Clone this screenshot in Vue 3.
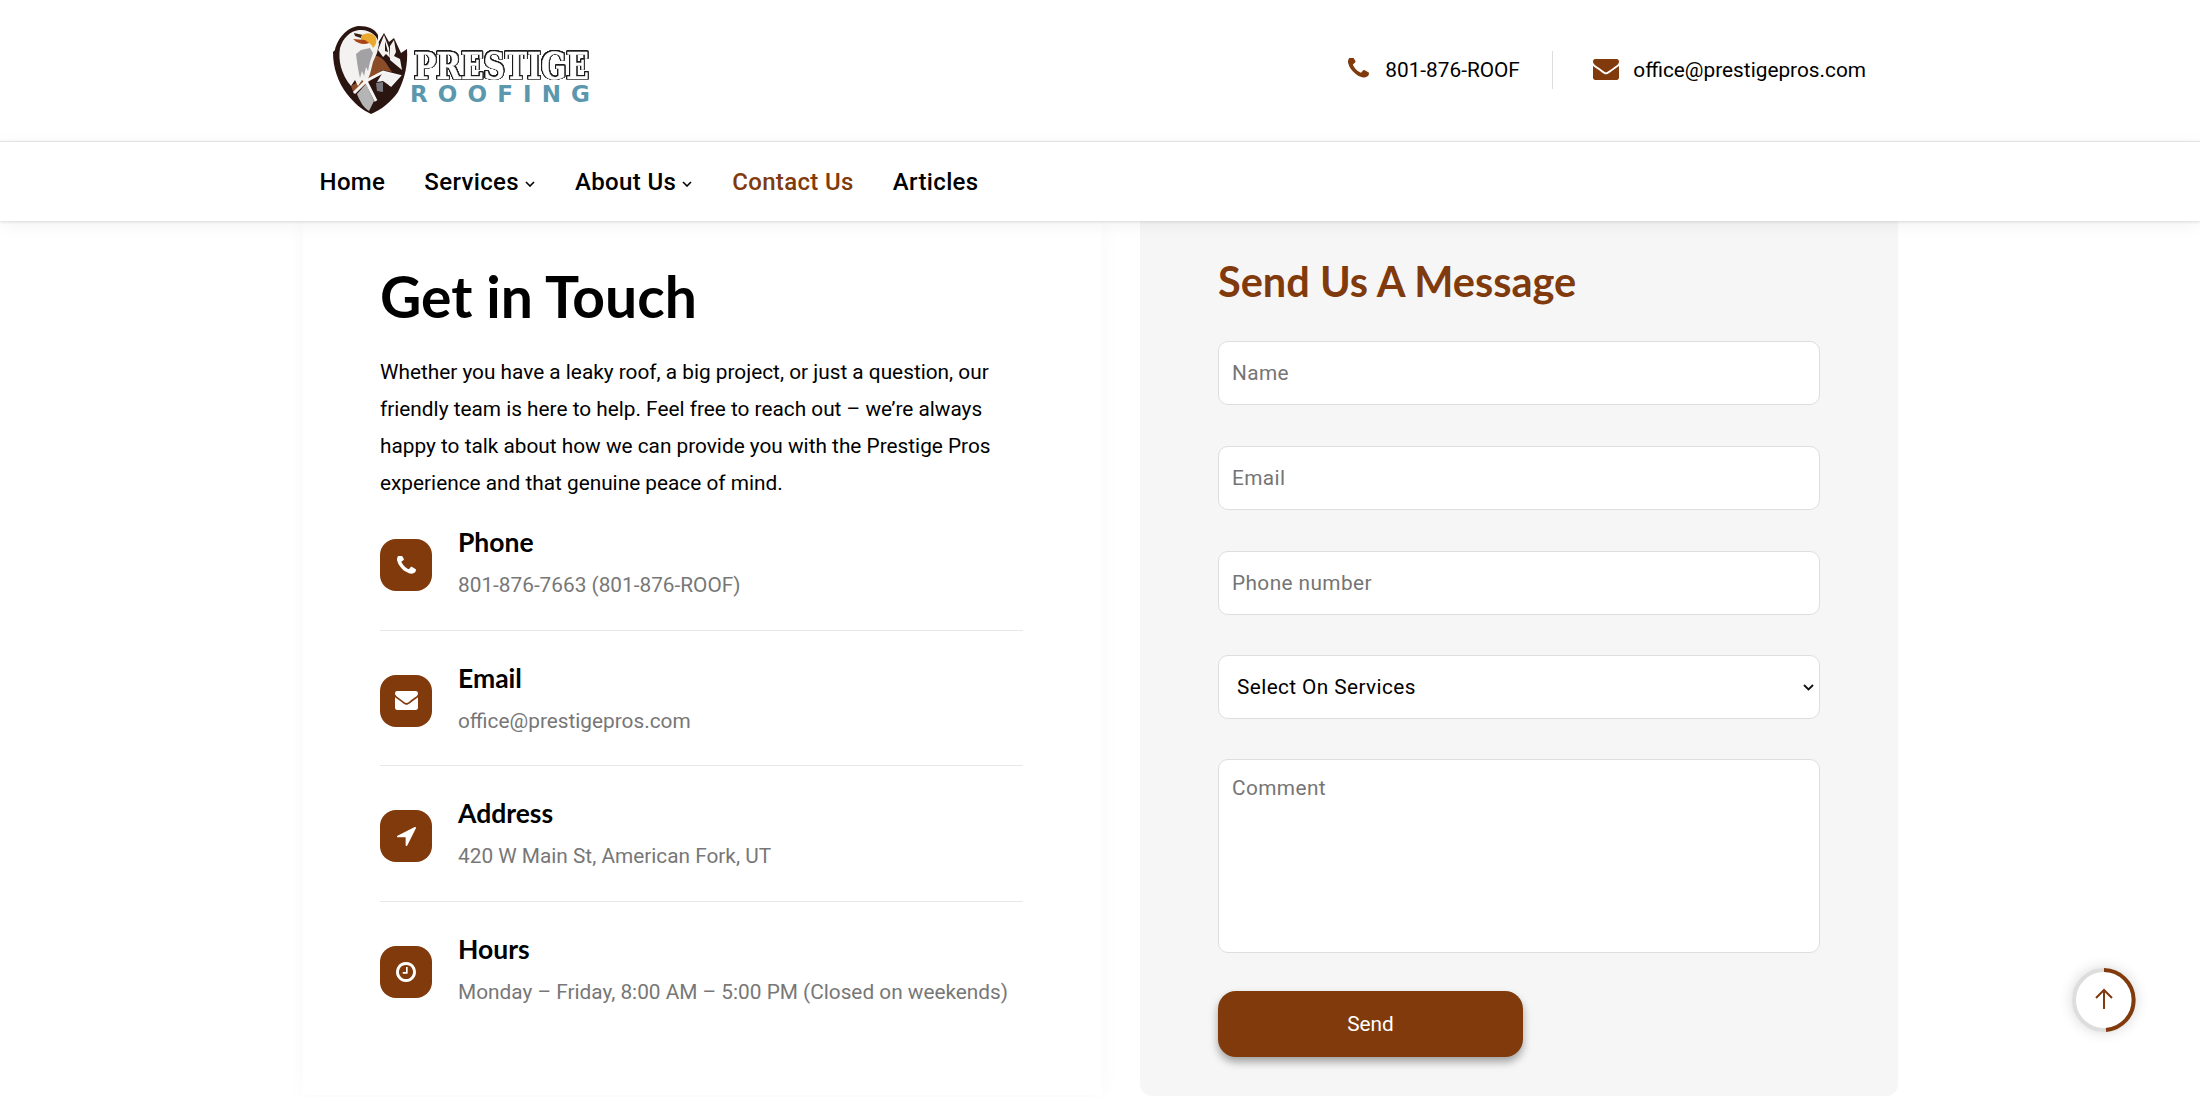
<script setup>
const rows = [
  { title: 'Phone', text: '801-876-7663 (801-876-ROOF)', icon: 'phone' },
  { title: 'Email', text: 'office@prestigepros.com', icon: 'mail' },
  { title: 'Address', text: '420 W Main St, American Fork, UT', icon: 'nav' },
  { title: 'Hours', text: 'Monday – Friday, 8:00 AM – 5:00 PM (Closed on weekends)', icon: 'clock' },
]
const phonePath = 'M1600 1240q0 27-10 70.5t-21 68.5q-21 50-122 106-94 51-186 51-27 0-53-3.5t-57.5-12.5-47-14.5-55.5-20.5-49-18q-98-35-175-83-127-79-264-216t-216-264q-48-77-83-175-3-9-18-49t-20.5-55.5-14.5-47-12.5-57.5-3.5-53q0-92 51-186 56-101 106-122 25-11 68.5-21t70.5-10q14 0 21 3 18 6 53 76 11 19 30 54t35 63.5 31 53.5q3 4 17.5 25t21.5 35.5 7 28.5q0 20-28.5 50t-62 55-62 53-28.5 46q0 9 5 22.5t8.5 20.5 14 24 11.5 19q76 137 174 235t235 174q2 1 19 11.5t24 14 20.5 8.5 22.5 5q18 0 46-28.5t53-62 55-62 50-28.5q14 0 28.5 7t35.5 21.5 25 17.5q25 15 53.5 31t63.5 35 54 30q70 35 76 53 3 7 3 21z'
const mailPath = 'M1792 710v794q0 66-47 113t-113 47h-1472q-66 0-113-47t-47-113v-794q44 49 101 87 362 246 497 345 57 42 92.5 65.5t94.5 48 110 24.5h2q51 0 110-24.5t94.5-48 92.5-65.5q170-123 498-345 57-39 100-87zm0-294q0 79-49 151t-122 123q-376 261-468 325-10 7-42.5 30.5t-54 38-52 32.5-57.5 27-50 9h-2q-23 0-50-9t-57.5-27-52-32.5-54-38-42.5-30.5q-91-64-262-182.5t-205-142.5q-62-42-117-115.5t-55-136.5q0-78 41.5-130t118.5-52h1472q65 0 112.5 47t47.5 113z'
const navPath = 'M1593 349l-640 1280q-17 35-57 35-5 0-15-2-22-5-35.5-22.5t-13.5-39.5v-576h-576q-22 0-39.5-13.5t-22.5-35.5 4-42 29-30l1280-640q13-7 29-7 27 0 45 19 15 14 18.5 34.5t-6.5 39.5z'
const clockPath = 'M1024 544v448q0 14-9 23t-23 9h-320q-14 0-23-9t-9-23v-64q0-14 9-23t23-9h224v-352q0-14 9-23t23-9h64q14 0 23 9t9 23zm416 352q0-148-73-273t-198-198-273-73-273 73-198 198-73 273 73 273 198 198 273 73 273-73 198-198 73-273zm224 0q0 209-103 385.5t-279.5 279.5-385.5 103-385.5-103-279.5-279.5-103-385.5 103-385.5 279.5-279.5 385.5-103 385.5 103 279.5 279.5 103 385.5z'
</script>

<template>
  <div class="page">
    <header class="top">
      <div class="logo">
        <svg class="shield" viewBox="0 0 76 88" width="76" height="88" aria-hidden="true">
          <path d="M27 0c9 0 16 3 19 9v8l6-10 5 9 5-4 7 15 6-4c1 15-2 29-9 43-7 10-17 18-27 22-9-4-17-11-24-20C6 56 1 42 1 26l2-2C5 14 14 1 27 0z" fill="#2a1511"/>
          <path d="M39 30c7-2 13 3 17 10l4 6-10-2-20 18-8 6-3-8 7-4 8-10 3-12z" fill="#8a4d28"/>
          <path d="M27 4c-9 1-16 8-19 18-2 12 1 26 11 38l4-6 3 6 4-6 4 4 4-10 3-12 4-9 2-9C46 10 38 3 27 4z" fill="#f3f2f1"/>
          <path d="M24 28c1 8 2 16 4 24l2-7 2 5 2-9 2 4 2-9 3-9-3-5-9 2z" fill="#a2a2a5"/>
          <path d="M22 7l9 2-2 3-6-2z" fill="#3a2118"/>
          <path d="M29 10c5-4 12-4 15 2 1 4 0 7-3 10-1-3-3-5-5-5l-7-3z" fill="#eaa92c"/>
          <path d="M21 13l12 1 4 3c-5 2-11 1-16-4z" fill="#a9431a"/>
          <path d="M46 24l6-15 5 13 1 10-4-4-3 3zM58 20l4-6 2 12-2 4 6 3 2 11-12-10z" fill="#f4f2f1"/>
          <path d="M53 15l3 11-3-1z" fill="#2a1511"/>
          <path d="M25 68l9-10 8 17-5 10c-5-3-9-9-12-17z" fill="#b5b5b6"/>
          <path d="M22 67l12-12 10 20M34 55l17-9 16 4-9 10" fill="none" stroke="#f6f6f6" stroke-width="3"/>
          <path d="M51 46l16 4-9 10-7-5-6 1z" fill="#f2f2f2"/>
          <path d="M44 57l7-1v10l-6-1z" fill="#7a7a7e"/>
        </svg>
        <svg class="wordmark" viewBox="0 0 180 56" width="180" height="56">
          <text class="prestige" x="1" y="32" textLength="175" lengthAdjust="spacingAndGlyphs">PRESTIGE</text>
          <text class="roofing" x="-3" y="55" textLength="180" lengthAdjust="spacing">ROOFING</text>
        </svg>
      </div>
      <div class="contacts">
        <div class="contact">
          <svg class="c-phone" viewBox="192 256 1408 1280"><path :d="phonePath"/></svg>
          <span>801-876-ROOF</span>
        </div>
        <div class="vr"></div>
        <div class="contact">
          <svg class="c-mail" viewBox="0 256 1792 1408" preserveAspectRatio="none"><path :d="mailPath"/></svg>
          <span>office@prestigepros.com</span>
        </div>
      </div>
    </header>

    <nav class="nav">
      <a>Home</a>
      <a class="n-item">Services<svg class="car" viewBox="0 0 10 6"><path d="M1 1l4 4 4-4"/></svg></a>
      <a class="n-item">About Us<svg class="car" viewBox="0 0 10 6"><path d="M1 1l4 4 4-4"/></svg></a>
      <a class="active">Contact Us</a>
      <a>Articles</a>
    </nav>

    <main class="main">
      <section class="info">
        <h1>Get in Touch</h1>
        <p class="lead">Whether you have a leaky roof, a big project, or just a question, our friendly team is here to help. Feel free to reach out – we’re always happy to talk about how we can provide you with the Prestige Pros experience and that genuine peace of mind.</p>
        <div v-for="r in rows" :key="r.title" class="row">
          <div class="badge">
            <svg v-if="r.icon === 'phone'" class="i-phone" viewBox="192 256 1408 1280"><path :d="phonePath"/></svg>
            <svg v-else-if="r.icon === 'mail'" class="i-mail" viewBox="0 256 1792 1408" preserveAspectRatio="none"><path :d="mailPath"/></svg>
            <svg v-else-if="r.icon === 'nav'" class="i-nav" viewBox="192 256 1408 1408"><path :d="navPath"/></svg>
            <svg v-else class="i-clock" viewBox="128 128 1536 1536"><path :d="clockPath"/></svg>
          </div>
          <div class="row-text">
            <h3>{{ r.title }}</h3>
            <p>{{ r.text }}</p>
          </div>
        </div>
      </section>

      <section class="form">
        <h2>Send Us A Message</h2>
        <input class="field" placeholder="Name" />
        <input class="field" placeholder="Email" />
        <input class="field phone-f" placeholder="Phone number" />
        <select class="field sel"><option>Select On Services</option></select>
        <textarea class="field area" placeholder="Comment"></textarea>
        <button class="send" type="button">Send</button>
      </section>
    </main>

    <button class="totop" type="button" aria-label="Back to top">
      <svg viewBox="0 0 64 64" width="64" height="64">
        <circle cx="32" cy="32" r="30" class="track"/>
        <path d="M32 2a30 30 0 0 1 2 59.9" class="prog"/>
        <path d="M32 41V22M24 30l8-8 8 8" class="arrow"/>
      </svg>
    </button>
  </div>
</template>

<style>
html, body { margin: 0; background: #fff; }
</style>

<style scoped>
.page { width: 2200px; height: 1097px; overflow: hidden; position: relative; background: #fff; font-family: Roboto, sans-serif; color: #000; }
.top { height: 141px; box-sizing: border-box; display: flex; justify-content: space-between; align-items: flex-start; padding: 0 334px 0 332px; }
.logo { display: flex; align-items: flex-start; padding-top: 26px; }
.shield { display: block; }
.wordmark { display: block; margin: 21px 0 0 5px; overflow: visible; }
.prestige { font-family: "DejaVu Serif", serif; font-weight: 700; font-size: 38px; fill: #fff; stroke: #fff; stroke-width: .5px; filter: drop-shadow(.6px 0 0 #1a1a1a) drop-shadow(-.6px 0 0 #1a1a1a) drop-shadow(0 .6px 0 #1a1a1a) drop-shadow(0 -.6px 0 #1a1a1a) drop-shadow(1px .4px 0 #333); }
.roofing { font-family: "DejaVu Sans", sans-serif; font-weight: 700; font-size: 23px; fill: #5b97ad; }
.contacts { display: flex; align-items: center; height: 38px; margin-top: 51px; }
.contact { display: flex; align-items: center; font-size: 20.8px; line-height: 38px; }
.c-phone { width: 21px; height: 20px; fill: #803a0c; margin-right: 16px; margin-top: -4px; }
.c-mail { width: 26px; height: 21px; fill: #803a0c; margin-right: 14.5px; margin-top: -1px; }
.vr { width: 1px; height: 38px; background: #ddd; margin: 0 40px 0 32px; }

.nav { position: relative; z-index: 2; height: 80px; box-sizing: border-box; border-top: 1px solid #e4e4e4; background: #fff; box-shadow: 0 1px 3px rgba(0,0,0,.12), 0 4px 18px rgba(0,0,0,.05); display: flex; align-items: center; gap: 39px; padding-left: 319.5px; font-size: 24px; font-weight: 500; letter-spacing: .35px; }
.n-item { display: flex; align-items: center; }
.car { width: 10px; height: 6px; margin: 4px 1px 0 6px; fill: none; stroke: #000; stroke-width: 1.6; }
.active { color: #803a0c; }

.main { display: flex; gap: 38px; padding-left: 303px; height: 876px; }
.info { width: 799px; height: 874px; box-sizing: border-box; padding: 39px 79px 0 77px; background: #fff; box-shadow: 0 0 20px rgba(0,0,0,.03); }
h1 { margin: 0 0 21.5px; font-family: Lato, sans-serif; font-weight: 700; font-size: 57px; line-height: 72px; color: #000; }
.lead { margin: 0 0 21.5px; font-size: 20.8px; line-height: 37.2px; }
.row { display: flex; gap: 26px; height: 106.7px; margin-bottom: 29px; box-sizing: border-box; border-bottom: 1px solid #e8e8e8; }
.row:last-child { border-bottom: 0; }
.badge { width: 52px; height: 52px; margin-top: 15px; flex: none; border-radius: 16px; background: #803a0c; display: flex; align-items: center; justify-content: center; }
.badge svg { display: block; fill: #fff; }
.i-phone { width: 19px; height: 18px; }
.i-mail { width: 23px; height: 19px; }
.i-nav { width: 19px; height: 19px; }
.i-clock { width: 20px; height: 20px; }
.row-text h3 { margin: 0; font-family: Lato, sans-serif; font-weight: 700; font-size: 26.5px; line-height: 36px; color: #000; }
.row-text p { margin: 9px 0 0; font-size: 20.8px; line-height: 32px; color: #777; }

.form { width: 758px; height: 875px; box-sizing: border-box; padding: 36px 78px 0; background: #f6f6f7; border-radius: 0 0 12px 12px; display: flex; flex-direction: column; align-items: flex-start; }
h2 { margin: 0 0 36px; font-family: Lato, sans-serif; font-weight: 700; font-size: 41.5px; line-height: 48px; color: #803a0c; }
.field { display: block; width: 602px; height: 64px; box-sizing: border-box; background: #fff; border: 1px solid #dedede; border-radius: 10px; padding: 0 13px; margin: 0 0 41px; font-family: Roboto, sans-serif; font-size: 20.8px; letter-spacing: .4px; color: #000; outline: 0; }
.field::placeholder { color: #757575; opacity: 1; }
.phone-f { margin-bottom: 40px; }
.sel { margin-bottom: 40px; padding-left: 18px; appearance: none; background: #fff url("data:image/svg+xml;utf8,<svg xmlns='http://www.w3.org/2000/svg' width='11' height='7' viewBox='0 0 11 7'><path d='M1 1l4.500 4.500L10 1' fill='none' stroke='%23111' stroke-width='1.8'/></svg>") no-repeat right 5px center; }
.area { height: 194px; padding: 14px 13px; margin-bottom: 38px; resize: none; line-height: 28px; }
.send { width: 305px; height: 66px; border: 0; border-radius: 18px; background: #803a0c; color: #fff; font-family: Roboto, sans-serif; font-size: 20.8px; box-shadow: 0 5px 9px rgba(0,0,0,.35); }

.totop { position: absolute; left: 2072px; top: 968px; width: 64px; height: 64px; padding: 0; border: 0; border-radius: 50%; background: #fff; box-shadow: 0 0 14px rgba(0,0,0,.16); }
.totop svg { display: block; fill: none; }
.track { stroke: #ddd; stroke-width: 4; }
.prog { stroke: #803a0c; stroke-width: 4; }
.arrow { stroke: #803a0c; stroke-width: 2; }
</style>
